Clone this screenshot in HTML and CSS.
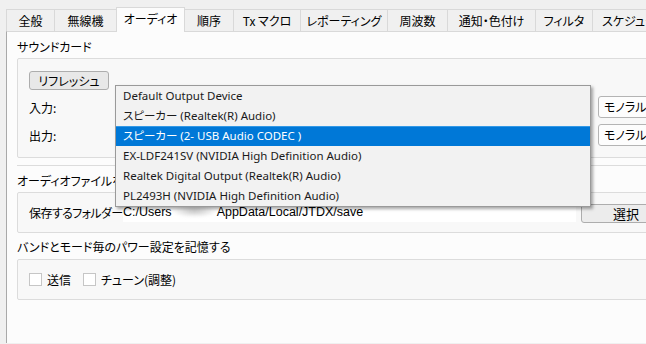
FILE: index.html
```html
<!DOCTYPE html>
<html>
<head>
    <title>設定 - オーディオ</title>
    <link rel="stylesheet" href="styles.css">
</head>
<body>
    <div class="window">
        <div class="tabs">
            <div class="tab">全般</div>
            <div class="tab">無線機</div>
            <div class="tab active">オーディオ</div>
            <div class="tab">順序</div>
            <div class="tab">Tx マクロ</div>
            <div class="tab">レポーティング</div>
            <div class="tab">周波数</div>
            <div class="tab">通知・色付け</div>
            <div class="tab">フィルタ</div>
            <div class="tab">スケジューラ</div>
        </div>

        <div class="panel">
            <div class="group-title">サウンドカード</div>
            <div class="group-box sound-box">
                <button class="btn refresh">リフレッシュ</button>
                <div class="device-row">
                    <span class="row-label">入力:</span>
                    <div class="combo device-combo"></div>
                    <div class="combo channel-combo">モノラル</div>
                </div>
                <div class="device-row">
                    <span class="row-label">出力:</span>
                    <div class="combo device-combo"></div>
                    <div class="combo channel-combo">モノラル</div>
                </div>
            </div>
            <div class="separator"></div>

            <div class="group-title">オーディオファイルを保存</div>
            <div class="group-box save-box">
                <span class="row-label folder-label">保存するフォルダー:</span>
                <div class="path-field">C:/Users<span class="blur"></span>AppData/Local/JTDX/save</div>
                <button class="btn choose">選択</button>
            </div>

            <div class="group-title">バンドとモード毎のパワー設定を記憶する</div>
            <div class="group-box power-box">
                <label class="check"><span class="check-box"></span>送信</label>
                <label class="check"><span class="check-box"></span>チューン(調整)</label>
            </div>
        </div>

        <!-- open list of the output device combo -->
        <div class="popup">
            <div class="popup-item">Default Output Device</div>
            <div class="popup-item">スピーカー (Realtek(R) Audio)</div>
            <div class="popup-item selected">スピーカー (2- USB Audio CODEC )</div>
            <div class="popup-item">EX-LDF241SV (NVIDIA High Definition Audio)</div>
            <div class="popup-item">Realtek Digital Output (Realtek(R) Audio)</div>
            <div class="popup-item">PL2493H (NVIDIA High Definition Audio)</div>
        </div>
    </div>
</body>
</html>
```

FILE: styles.css
```css
body {
    margin: 0;
    padding: 0;
    background-color: #f0f0f0;
    font-family: "Noto Sans CJK JP", sans-serif;
    font-size: 12px;
    font-feature-settings: "palt";
    color: #000;
}

.window {
    position: relative;
    width: 646px;
    height: 344px;
    overflow: hidden;
}

.tabs {
    display: flex;
    align-items: flex-end;
    height: 31px;
    padding-left: 6px;
    position: relative;
    z-index: 1;
}

    .tab {
        height: 21px;
        line-height: 21px;
        border: 1px solid #d9d9d9;
        border-bottom: none;
        margin-left: -1px;
        background-color: #f0f0f0;
        text-align: center;
        white-space: nowrap;
        flex-shrink: 0;
    }

        .tab:first-child {
            margin-left: 0;
        }

        .tab.active {
            height: 24px;
            line-height: 22px;
            margin-bottom: -1px;
            background-color: #fcfcfc;
        }

        .tab:nth-child(1) { width: 47px; }
        .tab:nth-child(2) { width: 61px; }
        .tab:nth-child(3) { width: 67px; }
        .tab:nth-child(4) { width: 48px; }
        .tab:nth-child(5) { width: 66px; }
        .tab:nth-child(6) { width: 86px; }
        .tab:nth-child(7) { width: 59px; }
        .tab:nth-child(8) { width: 87px; }
        .tab:nth-child(9) { width: 56px; }
        .tab:nth-child(10) { width: 90px; text-align: left; padding-left: 9px; }

.panel {
    margin-left: 6px;
    width: 800px;
    height: 312px;
    border-top: 1px solid #d9d9d9;
    border-left: 1px solid #a9a9a9;
    background-color: #fcfcfc;
    padding: 7px 0 0 10px;
    box-sizing: border-box;
}

.group-title {
    height: 16px;
    line-height: 16px;
    white-space: nowrap;
}

.group-box {
    margin-top: 3px;
    border: 1px solid #dcdcdc;
    border-radius: 2px;
    background-color: #f8f8f8;
    box-sizing: border-box;
    padding-left: 11px;
}

.sound-box {
    height: 100px;
    padding-top: 12px;
}

.btn {
    font-family: "Noto Sans CJK JP", sans-serif;
    font-size: 12px;
    font-feature-settings: "palt";
    background-color: #e8e8e8;
    border: 1px solid #adadad;
    border-radius: 3px;
    padding: 0;
    color: #000;
    display: block;
}

.refresh {
    width: 80px;
    height: 19px;
    line-height: 16px;
}

.device-row {
    display: flex;
    align-items: center;
    height: 22px;
    margin-top: 6px;
}

.row-label {
    white-space: nowrap;
}

.device-row .row-label {
    width: 86px;
}

.combo {
    height: 22px;
    line-height: 20px;
    box-sizing: border-box;
    border: 1px solid #b4b4b4;
    border-radius: 3px;
    background-color: #fdfdfd;
}

.device-combo {
    width: 475px;
}

.channel-combo {
    width: 70px;
    margin-left: 8px;
    padding-left: 5px;
}

.separator {
    margin-top: 7px;
    height: 1px;
    background-color: #dcdcdc;
    margin-bottom: 7px;
}

.save-box {
    height: 41px;
    display: flex;
    align-items: center;
    padding-top: 0;
    margin-bottom: 6px;
}

.folder-label {
    width: 94px;
    flex-shrink: 0;
    letter-spacing: -0.6px;
}

.path-field {
    width: 453px;
    flex-shrink: 0;
    height: 19px;
    line-height: 19px;
    background-color: #ffffff;
    font-family: "Liberation Sans", Arial, sans-serif;
    font-size: 12.5px;
    white-space: nowrap;
}

.blur {
    display: inline-block;
    width: 45px;
    height: 12px;
    vertical-align: -1px;
    background: radial-gradient(ellipse at center, rgba(150, 150, 150, 0.55) 0%, rgba(200, 200, 200, 0.25) 55%, rgba(255, 255, 255, 0) 75%);
    filter: blur(1.5px);
}

.choose {
    margin-left: 5px;
    width: 90px;
    height: 19px;
    line-height: 16px;
    margin-top: 2px;
    background-color: #ececec;
    font-size: 13px;
    flex-shrink: 0;
}

.power-box {
    margin-top: 4px;
    height: 41px;
    display: flex;
    align-items: flex-start;
    padding-top: 12px;
}

.check {
    display: flex;
    align-items: center;
    height: 15px;
    margin-right: 12px;
    white-space: nowrap;
}

.check-box {
    width: 13px;
    height: 13px;
    box-sizing: border-box;
    border: 1px solid #c6c6c6;
    background-color: #fff;
    margin-right: 5px;
}

.popup {
    position: absolute;
    left: 115px;
    top: 85px;
    width: 476px;
    height: 122px;
    box-sizing: border-box;
    border: 1px solid #9a9a9a;
    background-color: #f2f2f2;
    box-shadow: 2px 2px 3px rgba(0, 0, 0, 0.35);
    z-index: 2;
    font-family: "Noto Sans", "Noto Sans CJK JP", sans-serif;
    font-size: 11.5px;
    font-feature-settings: "palt";
}

.popup-item {
    height: 20px;
    line-height: 20px;
    padding-left: 7px;
    color: #1a1a1a;
    white-space: nowrap;
    box-sizing: border-box;
}

    .popup-item.selected {
        background-color: #0078d7;
        border-top: 1px solid #3399e6;
        line-height: 18px;
        color: #fff;
    }
```
